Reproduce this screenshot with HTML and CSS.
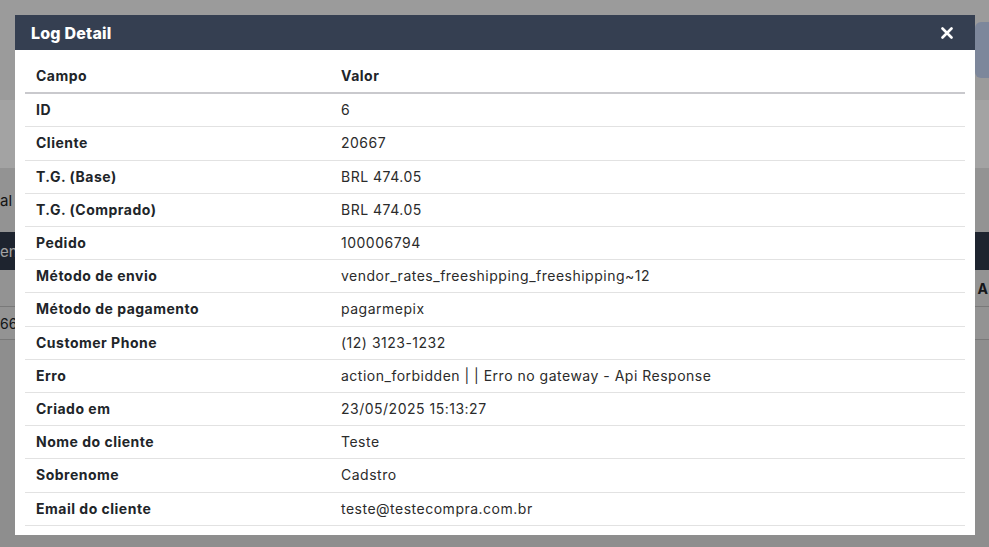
FILE: index.html
```html
<!DOCTYPE html>
<html lang="pt-br">

<head>
    <meta charset="UTF-8">
    <meta name="viewport" content="width=device-width, initial-scale=1.0">
    <title>Log Detail</title>
    <link rel="stylesheet" href="styles.css">
</head>

<body>
    <!-- pagina por tras do modal -->
    <div class="page">
        <div class="page-top">
            <span class="page-btn"></span>
        </div>
        <div class="page-tabs"></div>
        <div class="page-filter">al</div>
        <div class="page-table">
            <div class="page-thead">en</div>
            <div class="page-hrow"><span>A</span></div>
            <div class="page-row">66</div>
        </div>
    </div>

    <div class="overlay"></div>

    <div class="modal">
        <div class="modal-header">
            <h2>Log Detail</h2>
            <button class="close" aria-label="Fechar">
                <svg width="12" height="12" viewBox="0 0 12 12">
                    <path d="M1.5 1.5 L10.5 10.5 M10.5 1.5 L1.5 10.5" stroke="#fff" stroke-width="2.6" stroke-linecap="round" />
                </svg>
            </button>
        </div>
        <div class="modal-body">
            <table class="log-table">
                <thead>
                    <tr>
                        <th class="col-campo">Campo</th>
                        <th>Valor</th>
                    </tr>
                </thead>
                <tbody>
                    <tr><th>ID</th><td>6</td></tr>
                    <tr><th>Cliente</th><td>20667</td></tr>
                    <tr><th>T.G. (Base)</th><td>BRL 474.05</td></tr>
                    <tr><th>T.G. (Comprado)</th><td>BRL 474.05</td></tr>
                    <tr><th>Pedido</th><td>100006794</td></tr>
                    <tr><th>Método de envio</th><td>vendor_rates_freeshipping_freeshipping~12</td></tr>
                    <tr><th>Método de pagamento</th><td>pagarmepix</td></tr>
                    <tr><th>Customer Phone</th><td>(12) 3123-1232</td></tr>
                    <tr><th>Erro</th><td>action_forbidden | | Erro no gateway - Api Response</td></tr>
                    <tr><th>Criado em</th><td>23/05/2025 15:13:27</td></tr>
                    <tr><th>Nome do cliente</th><td>Teste</td></tr>
                    <tr><th>Sobrenome</th><td>Cadstro</td></tr>
                    <tr><th>Email do cliente</th><td>teste@testecompra.com.br</td></tr>
                </tbody>
            </table>
        </div>
    </div>
</body>

</html>
```

FILE: styles.css
```css
* {
    padding: 0;
    margin: 0;
    box-sizing: border-box;
}

:root {
    --bg-header: #353f51;
    --color-text: #212529;
    --color-line: #e2e2e2;
    --color-head-line: #c9c9cd;
}

body {
    font-family: Inter, 'Open Sans', 'Liberation Sans', sans-serif;
    color: var(--color-text);
    overflow: hidden;
    height: 547px;
    background: #dedede;
}

/* pagina de fundo */
.page {
    font-size: 14px;
}

.page-top {
    height: 100px;
    background: #f2f2f2;
    display: flex;
    justify-content: flex-end;
    align-items: center;
}

.page-btn {
    width: 14px;
    height: 56px;
    background: #c4d4f3;
    border-radius: 6px 0 0 6px;
}

.page-tabs {
    height: 68px;
    background: #ffffff;
}

.page-filter {
    height: 64px;
    background: #e6e6e6;
    display: flex;
    align-items: center;
    font-size: 15px;
    color: #222;
}

.page-thead {
    height: 38px;
    background: #30394a;
    color: #fff;
    display: flex;
    align-items: center;
    font-size: 15px;
}

.page-hrow {
    height: 37px;
    background: #e6e6e6;
    border-bottom: 1px solid #bdbdbd;
    display: flex;
    align-items: center;
    justify-content: flex-end;
    font-weight: 700;
    font-size: 14px;
    padding-right: 1px;
}

.page-row {
    height: 33px;
    background: #e6e6e6;
    border-bottom: 1px solid #bdbdbd;
    display: flex;
    align-items: center;
    font-size: 14px;
}

.overlay {
    position: fixed;
    inset: 0;
    background: rgba(0, 0, 0, .36);
}

/* modal */
.modal {
    position: fixed;
    left: 15px;
    top: 15px;
    width: 960px;
    height: 520px;
    background: #fff;
    overflow: hidden;
}

.modal-header {
    height: 35px;
    background: var(--bg-header);
    display: flex;
    align-items: center;
    justify-content: space-between;
    padding: 0 22px 0 16px;
}

.modal-header h2 {
    color: #fff;
    font-size: 16px;
    font-weight: 800;
    letter-spacing: 0.2px;
}

.close {
    background: none;
    border: 0;
    display: flex;
    cursor: pointer;
}

.modal-body {
    padding: 10px 10px 11px 10px;
}

.log-table {
    width: 100%;
    border-collapse: collapse;
    font-size: 14px;
    letter-spacing: 0.5px;
}

.log-table th,
.log-table td {
    text-align: left;
    padding: 6px 11px;
    line-height: 20.2px;
    border-bottom: 1px solid var(--color-line);
}

.log-table th {
    font-weight: 700;
}

.log-table td {
    font-weight: 400;
    color: #2b2b2b;
}

.log-table thead th {
    height: 32px;
    padding-top: 6px;
    padding-bottom: 6px;
    border-bottom: 2px solid var(--color-head-line);
}

.col-campo {
    width: 305px;
}
```
